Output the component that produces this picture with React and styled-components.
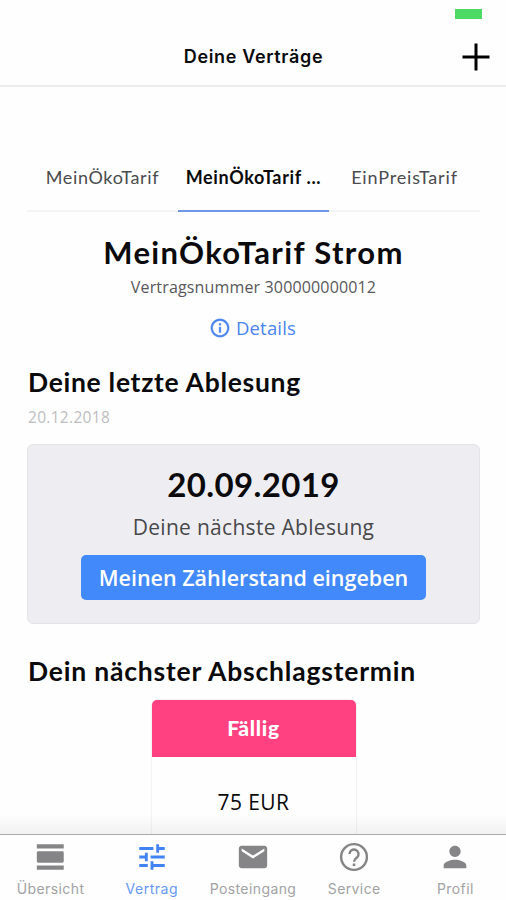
import React from 'react'
import styled, { createGlobalStyle } from 'styled-components'
import {
  MdViewDay,
  MdTune,
  MdMail,
  MdPerson,
  MdInfoOutline,
} from 'react-icons/md'

const GlobalStyle = createGlobalStyle`
  * {
    box-sizing: border-box;
  }

  body {
    margin: 0;
    background: #fff;
    overflow: hidden;
  }

  h1, h2, p {
    margin: 0;
  }
`

const Screen = styled.div`
  display: flex;
  flex-direction: column;
  width: 506px;
  height: 900px;
  overflow: hidden;
  background: #fefefe;
  color: #0a0a0c;
  font-family: 'Open Sans', sans-serif;
`

const StatusBar = styled.div`
  display: flex;
  justify-content: flex-end;
  height: 28px;
  padding: 9px 24px 0 0;
`

const Battery = styled.div`
  width: 27px;
  height: 10px;
  background: #4cd964;
`

const Header = styled.header`
  display: grid;
  grid-template-columns: 1fr auto 1fr;
  align-items: center;
  height: 59px;
  padding-right: 16px;
  border-bottom: 2px solid #ededee;
`

const HeaderTitle = styled.h1`
  grid-column: 2;
  margin-left: 17px;
  font-family: Inter, sans-serif;
  font-size: 18px;
  font-weight: 600;
  line-height: 24px;
  letter-spacing: 0.65px;
`

const AddButton = styled.button`
  display: flex;
  justify-self: end;
  padding: 0;
  border: 0;
  background: none;
  color: #000;
`

const Content = styled.main`
  flex: 1;
  min-height: 0;
  padding: 57px 26px 0 27px;
  overflow: hidden;
`

const Tabs = styled.div`
  display: grid;
  grid-template-columns: repeat(3, 1fr);
`

const Tab = styled.div`
  height: 68px;
  padding-top: 20px;
  border-bottom: 2px solid ${p => (p.$active ? '#6f97e8' : '#f3f4f5')};
  color: ${p => (p.$active ? '#0a0a0c' : '#4b4b4e')};
  font-family: Lato, sans-serif;
  font-size: 18px;
  font-weight: ${p => (p.$active ? 700 : 400)};
  line-height: 26px;
  letter-spacing: ${p => p.$spacing};
  text-align: center;
  white-space: nowrap;
`

const Contract = styled.section`
  display: flex;
  flex-direction: column;
  align-items: center;
  padding-top: 20px;
`

const ContractName = styled.h2`
  font-family: Lato, sans-serif;
  font-size: 31px;
  font-weight: 700;
  line-height: 40px;
  letter-spacing: 1.35px;
`

const ContractNumber = styled.p`
  margin-top: 4px;
  color: #58585b;
  font-size: 16px;
  line-height: 22px;
  letter-spacing: 0.15px;
`

const DetailsLink = styled.a`
  display: flex;
  align-items: center;
  gap: 5px;
  margin: 17px 2px 0 0;
  color: #4a84ee;
  font-size: 18.5px;
  line-height: 26px;
  letter-spacing: 0.2px;

  path:last-child {
    stroke: currentColor;
    stroke-width: 0.4px;
  }
`

const SectionTitle = styled.h2`
  margin-top: ${p => p.$top};
  padding-left: 1px;
  font-family: Lato, sans-serif;
  font-size: 26.5px;
  font-weight: 700;
  line-height: 34px;
  letter-spacing: ${p => p.$spacing};
`

const ReadingDate = styled.p`
  margin-top: 7px;
  padding-left: 1px;
  color: #bdbdbf;
  font-size: 15.5px;
  line-height: 22px;
  letter-spacing: 0.3px;
`

const ReadingCard = styled.section`
  display: flex;
  flex-direction: column;
  align-items: center;
  height: 180px;
  margin-top: 16px;
  padding-top: 18px;
  border: 1px solid #e4e4e7;
  border-radius: 6px;
  background: #eeeef2;
`

const NextDate = styled.p`
  font-family: Lato, sans-serif;
  font-size: 33px;
  font-weight: 700;
  line-height: 42px;
  letter-spacing: 0.35px;
`

const NextLabel = styled.p`
  margin-top: 8px;
  color: #48484b;
  font-size: 21px;
  line-height: 28px;
  letter-spacing: 0.3px;
`

const ReadingButton = styled.button`
  width: 345px;
  height: 45px;
  margin-top: 14px;
  padding: 0;
  border: 0;
  border-radius: 5px;
  background: #4289fb;
  color: #fff;
  font-family: 'Open Sans', sans-serif;
  font-size: 21.5px;
  font-weight: 600;
  white-space: nowrap;
`

const PaymentCard = styled.section`
  width: 204px;
  height: 200px;
  margin: 12px auto 0;
  border-radius: 6px;
  text-align: center;
  box-shadow: 0 0 2px #d5d5d8;
`

const PaymentStatus = styled.div`
  height: 57px;
  border-radius: 5px 5px 0 0;
  background: #ff4081;
  color: #fff;
  font-family: Lato, sans-serif;
  font-size: 21px;
  font-weight: 900;
  line-height: 56px;
  letter-spacing: 0.7px;
`

const PaymentAmount = styled.p`
  padding-top: 30px;
  font-size: 21px;
  font-weight: 400;
  line-height: 30px;
  letter-spacing: 0.4px;
`

const TabBar = styled.nav`
  position: relative;
  display: grid;
  grid-template-columns: repeat(5, 1fr);
  height: 66px;
  border-top: 1px solid #b4b4b6;
  background: #fefefe;

  &::before {
    content: '';
    position: absolute;
    right: 0;
    bottom: 100%;
    left: 0;
    height: 22px;
    background: linear-gradient(rgba(0, 0, 0, 0), rgba(0, 0, 0, 0.05));
  }
`

const TabBarItem = styled.a`
  display: flex;
  flex-direction: column;
  align-items: center;
  padding-top: 5px;
  color: ${p => (p.$active ? '#4183f4' : '#858587')};
`

const TabBarLabel = styled.span`
  margin-top: 5px;
  color: ${p => (p.$active ? '#6798f2' : '#a2a2a4')};
  font-family: Inter, sans-serif;
  font-size: 14px;
  line-height: 20px;
  letter-spacing: ${p => p.$spacing};
`

function HelpIcon({ size }) {
  return (
    <svg width={size} height={size} viewBox="0 0 24 24" fill="none" stroke="currentColor">
      <circle cx="12" cy="12" r="9.1" strokeWidth="1.7" />
      <path d="M8.8 9.9a3.2 3.2 0 1 1 5.4 2.3c-1.2 1.1-2.2 1.5-2.2 3.2" strokeWidth="1.7" />
      <path d="M12 16.6v1.8" strokeWidth="1.8" />
    </svg>
  )
}

const tabs = [
  { name: 'MeinÖkoTarif', spacing: '0.65px' },
  { name: 'MeinÖkoTarif ...', spacing: '0.65px', active: true },
  { name: 'EinPreisTarif', spacing: '0.85px' },
]

const navItems = [
  { label: 'Übersicht', icon: MdViewDay, spacing: '0.4px' },
  { label: 'Vertrag', icon: MdTune, spacing: '0.5px', active: true },
  { label: 'Posteingang', icon: MdMail, spacing: '0.4px' },
  { label: 'Service', icon: HelpIcon, spacing: '0.4px' },
  { label: 'Profil', icon: MdPerson, spacing: '0.4px' },
]

export default function App() {
  return (
    <Screen>
      <GlobalStyle />
      <StatusBar>
        <Battery />
      </StatusBar>
      <Header>
        <HeaderTitle>Deine Verträge</HeaderTitle>
        <AddButton aria-label="Vertrag hinzufügen">
          <svg width="28" height="28" viewBox="0 0 28 28">
            <path d="M14 0.5v27M0.5 14h27" stroke="currentColor" strokeWidth="3" />
          </svg>
        </AddButton>
      </Header>
      <Content>
        <Tabs>
          {tabs.map(tab => (
            <Tab key={tab.name} $active={tab.active} $spacing={tab.spacing}>
              {tab.name}
            </Tab>
          ))}
        </Tabs>
        <Contract>
          <ContractName>MeinÖkoTarif Strom</ContractName>
          <ContractNumber>Vertragsnummer 300000000012</ContractNumber>
          <DetailsLink>
            <MdInfoOutline size={22} />
            Details
          </DetailsLink>
        </Contract>
        <SectionTitle $top="24px" $spacing="0.7px">Deine letzte Ablesung</SectionTitle>
        <ReadingDate>20.12.2018</ReadingDate>
        <ReadingCard>
          <NextDate>20.09.2019</NextDate>
          <NextLabel>Deine nächste Ablesung</NextLabel>
          <ReadingButton>Meinen Zählerstand eingeben</ReadingButton>
        </ReadingCard>
        <SectionTitle $top="30px" $spacing="0.8px">Dein nächster Abschlagstermin</SectionTitle>
        <PaymentCard>
          <PaymentStatus>Fällig</PaymentStatus>
          <PaymentAmount>75 EUR</PaymentAmount>
        </PaymentCard>
      </Content>
      <TabBar>
        {navItems.map(({ label, icon: Icon, spacing, active }) => (
          <TabBarItem key={label} $active={active}>
            <Icon size={34} />
            <TabBarLabel $active={active} $spacing={spacing}>{label}</TabBarLabel>
          </TabBarItem>
        ))}
      </TabBar>
    </Screen>
  )
}
